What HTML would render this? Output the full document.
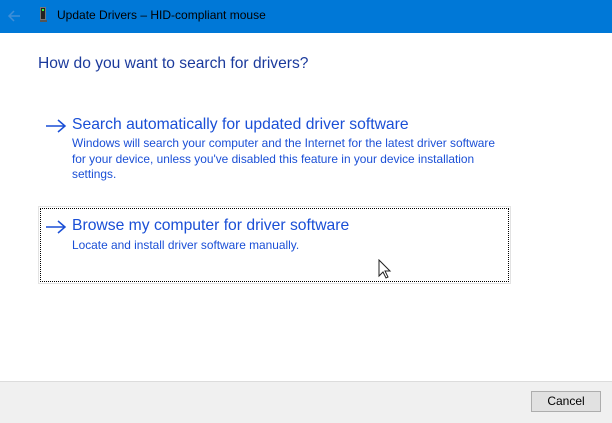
<!DOCTYPE html>
<html><head><style>
body{margin:0;width:612px;height:422px;position:relative;background:#fff;font-family:"Segoe UI","Liberation Sans",sans-serif;overflow:hidden}
.tb{position:absolute;left:0;top:0;width:612px;height:33px;background:#0078d7}
.t{position:absolute;white-space:nowrap}
.h{color:#1b3a9c;font-size:15.6px}
.m{color:#1a4fd6;font-size:15.7px}
.d{color:#1a4fd6;font-size:11.9px;line-height:15.5px}
.arr{position:absolute}
.foot{position:absolute;left:0;top:381px;width:612px;height:41px;background:#f0f0f0;border-top:1px solid #dcdcdc}
</style></head><body>
<div class="tb"></div>
<svg class="arr" style="left:7px;top:9px" width="14" height="14"><path d="M13 7H2M7 2L2 7l5 5" stroke="#3f8fd8" stroke-width="1.5" fill="none"/></svg>
<div style="position:absolute;left:40px;top:7px;width:6px;height:13px;background:#222;border:1px solid #777;box-sizing:border-box"></div>
<div style="position:absolute;left:42px;top:9px;width:2px;height:2px;background:#3f3"></div>
<div style="position:absolute;left:40px;top:20px;width:7px;height:2px;background:#555"></div>
<div class="t" style="left:57px;top:8px;font-size:12px;color:#000">Update Drivers – HID-compliant mouse</div>
<div class="t h" style="left:38px;top:55px">How do you want to search for drivers?</div>
<svg class="arr" style="left:45px;top:119px" width="22" height="14"><path d="M1 7h19M13 1l7 6-7 6" stroke="#1a4fd6" stroke-width="1.5" fill="none"/></svg>
<div class="t m" style="left:72px;top:116px">Search automatically for updated driver software</div>
<div class="t d" style="left:72px;top:136px">Windows will search your computer and the Internet for the latest driver software<br>for your device, unless you've disabled this feature in your device installation<br>settings.</div>
<div style="position:absolute;left:38px;top:206px;width:473px;height:78px;border:1px solid #e3e3e3;box-sizing:border-box"></div>
<div style="position:absolute;left:40px;top:208px;width:469px;height:74px;border:1px dotted #000;box-sizing:border-box"></div>
<svg class="arr" style="left:45px;top:220px" width="22" height="14"><path d="M1 7h19M13 1l7 6-7 6" stroke="#1a4fd6" stroke-width="1.5" fill="none"/></svg>
<div class="t m" style="left:72px;top:217px">Browse my computer for driver software</div>
<div class="t d" style="left:72px;top:238px">Locate and install driver software manually.</div>
<svg class="arr" style="left:378px;top:259px" width="14" height="22"><path d="M1 1v16l4-4 3 6 2-1-3-6h5z" fill="#fff" stroke="#222" stroke-width="1"/></svg>
<div class="foot"></div>
<div style="position:absolute;left:531px;top:391px;width:70px;height:21px;background:#e1e1e1;border:1px solid #adadad;box-sizing:border-box;font-size:12px;text-align:center;line-height:19px;color:#000">Cancel</div>
</body></html>
